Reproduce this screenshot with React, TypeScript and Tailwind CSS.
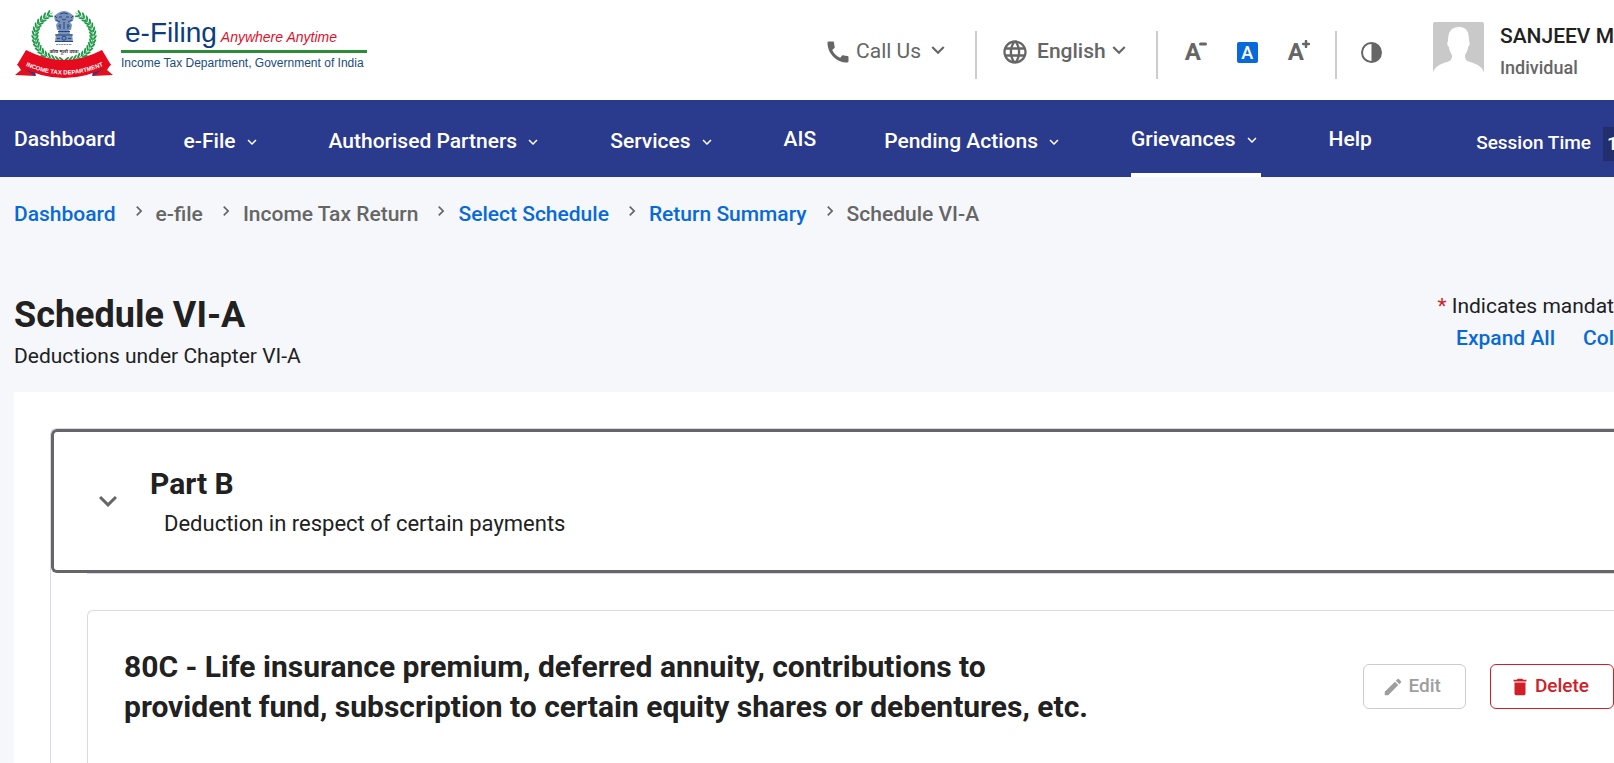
import { useState } from 'react'
import {
  MdCall,
  MdDelete,
  MdEdit,
  MdKeyboardArrowDown,
  MdKeyboardArrowRight,
  MdLanguage,
} from 'react-icons/md'

type NavItem = { label: string; menu?: boolean; active?: boolean }

const navItems: NavItem[] = [
  { label: 'Dashboard' },
  { label: 'e-File', menu: true },
  { label: 'Authorised Partners', menu: true },
  { label: 'Services', menu: true },
  { label: 'AIS' },
  { label: 'Pending Actions', menu: true },
  { label: 'Grievances', menu: true, active: true },
  { label: 'Help' },
]

const crumbs = [
  { label: 'Dashboard', link: true },
  { label: 'e-file' },
  { label: 'Income Tax Return' },
  { label: 'Select Schedule', link: true },
  { label: 'Return Summary', link: true },
  { label: 'Schedule VI-A' },
]

// Leaves of the left half of the wreath, mirrored for the right half.
const leaves = Array.from({ length: 17 }, (_, i) => {
  const deg = 98 + i * 9
  const a = (deg * Math.PI) / 180
  return { x: 49 + Math.cos(a) * 29, y: 27 + Math.sin(a) * 25, deg }
})

function Wreath() {
  return (
    <g fill="#1d9a48">
      {leaves.map((l) => (
        <g key={l.deg} transform={`translate(${l.x} ${l.y}) rotate(${l.deg + 90})`}>
          <ellipse cx="0" cy="-2.2" rx="3" ry="1" transform="rotate(-30)" />
          <ellipse cx="0" cy="2.2" rx="3" ry="1" transform="rotate(30)" />
          <rect x="-2.5" y="-0.3" width="5" height="0.6" />
        </g>
      ))}
    </g>
  )
}

function Emblem() {
  return (
    <svg viewBox="0 0 98 70" className="h-[70px] w-[98px] shrink-0" aria-hidden="true">
      <Wreath />
      <g transform="translate(98 0) scale(-1 1)">
        <Wreath />
      </g>
      {/* lion capital */}
      <g fill="#7891ba">
        <path d="M43 4q6-4 12 0l4 3-1 5-3 1 2 3-1 5H42l-1-5 2-3-3-1-1-5z" />
        <path d="M44 20h10l1 5H43z" />
        <path d="M41 25h16l1 8H40z" />
      </g>
      <g fill="none" stroke="#24477f" strokeWidth="1">
        <path d="M45 5q4-2 8 0M44 8h3M51 8h3M47 10q2 2 4 0M41 11l4 2M57 11l-4 2M45 15v5M49 13v7M53 15v5M43 17h2M53 17h2M40 7l2 2M58 7l-2 2" />
        <path d="M43 22.500h12M40 26h18M40 32.500h18" />
        <circle cx="49" cy="29.200" r="2" />
        <path d="M42 29.500h3M53 29.500h3" />
      </g>
      <path d="M41 35.500h16" stroke="#7d8fb0" strokeWidth="1.200" strokeDasharray="2 0.600" />
      <text
        x="49"
        y="44"
        textAnchor="middle"
        fontSize="5"
        fontWeight="700"
        fill="#333"
        className="font-['Noto_Sans','Noto_Sans_Devanagari',sans-serif]"
      >
        कोष मूलो दण्डः
      </text>
      {/* ribbon */}
      <path d="M2 55 18 58 21 67 0 66 6 61z" fill="#e0101f" />
      <path d="M96 55 80 58 77 67 98 66 92 61z" fill="#e0101f" />
      <path d="M6 57 21 61 20 67z" fill="#253a84" />
      <path d="M92 57 77 61 78 67z" fill="#253a84" />
      <path d="M11 41Q49 61 87 41L96 56Q49 82 2 56z" fill="#e60a1f" />
      <path id="ribbon" d="M7 55Q49 76 92 55" fill="none" />
      <text
        fontSize="6"
        fontWeight="700"
        fill="#fff"
        textAnchor="middle"
        className="font-['Liberation_Sans',sans-serif]"
      >
        <textPath href="#ribbon" startOffset="50%">
          INCOME TAX DEPARTMENT
        </textPath>
      </text>
    </svg>
  )
}

function Logo() {
  return (
    <a
      href="#"
      className="flex items-start gap-2 font-['Liberation_Sans',sans-serif]"
      aria-label="e-Filing home"
    >
      <Emblem />
      <div className="w-[246px]">
        <div className="flex h-11 items-baseline gap-1 border-b-[3px] border-[#2e8b37] px-1 pt-2">
          <span className="text-[28px] leading-8 text-[#0b3c80]">e-Filing</span>
          <span className="text-sm leading-none text-[#e2102c] italic">Anywhere Anytime</span>
        </div>
        <p className="text-xs leading-5 whitespace-nowrap text-[#1a4c7c]">
          Income Tax Department, Government of India
        </p>
      </div>
    </a>
  )
}

function Divider() {
  return <span className="mt-[6px] h-12 w-[2px] bg-[#cccccc]" />
}

function Header() {
  return (
    <header className="flex h-[100px] items-start justify-between bg-white pt-[9px] pl-[15px] text-[#666666]">
      <Logo />
      <div className="flex shrink-0 items-center pt-[11px] whitespace-nowrap">
        <div className="flex h-[62px] items-center">
          <button type="button" className="mr-6 flex items-center text-[21px]">
            <MdCall size={28} className="mr-1" />
            Call Us
            <MdKeyboardArrowDown size={26} className="mb-1 ml-1" />
          </button>
          <Divider />
          <button type="button" className="mr-6 ml-6 flex items-center text-[21px] font-medium">
            <MdLanguage size={28} className="mr-2" />
            English
            <MdKeyboardArrowDown size={26} className="mb-1" />
          </button>
          <Divider />
          <div className="flex items-center gap-[30px] pr-[25px] pl-[27px]">
            <button type="button" aria-label="Decrease text size" className="flex text-2xl leading-6 font-bold">
              A
              <svg viewBox="0 0 8 8" className="-ml-0.5 size-2" aria-hidden="true">
                <path d="M1.500 4h5" stroke="currentColor" strokeWidth="3" strokeLinecap="round" />
              </svg>
            </button>
            <button
              type="button"
              aria-label="Default text size"
              className="size-[21px] rounded-xs bg-[#086ad8] text-lg leading-[21px] font-medium text-white"
            >
              A
            </button>
            <button type="button" aria-label="Increase text size" className="flex text-2xl leading-6 font-bold">
              A
              <svg viewBox="0 0 8 8" className="-ml-0.5 size-2" aria-hidden="true">
                <path d="M1 4h6M4 1v6" stroke="currentColor" strokeWidth="2.500" strokeLinecap="round" />
              </svg>
            </button>
          </div>
          <Divider />
          <button type="button" aria-label="Toggle contrast" className="mr-[51px] ml-6">
            <svg viewBox="0 0 21 21" className="size-[21px]" aria-hidden="true">
              <circle cx="10.500" cy="10.500" r="9.500" fill="none" stroke="currentColor" strokeWidth="2" />
              <path d="M10.500 1a9.500 9.500 0 0 1 0 19z" fill="currentColor" />
            </svg>
          </button>
        </div>
        <svg viewBox="0 0 51 51" className="mr-4 mb-[10px] size-[51px]" aria-hidden="true">
          <rect width="51" height="51" rx="2" fill="#c9c9c9" />
          <path
            d="M0 51c1-6 7-9 14-11 4-1 5-3 5-7-2-3-3-6-3-8-2-1-2-5-1-6 0-9 3-14 11-14s10 5 10 14c1 1 1 5-1 6 0 2-1 5-3 8 0 4 1 6 5 7 7 2 13 5 14 11z"
            fill="#fff"
          />
        </svg>
        <div className="font-medium">
          <p className="text-[21px] leading-8 text-[#212121]">SANJEEV M</p>
          <p className="text-lg leading-8">Individual</p>
        </div>
      </div>
    </header>
  )
}

function NavBar() {
  return (
    <nav className="flex h-[77px] items-stretch justify-between bg-[#2a3a8c] pl-[14px] font-medium whitespace-nowrap text-white">
      <ul className="flex gap-[68px] text-[21px]">
        {navItems.map((item) => (
          <li
            key={item.label}
            className={
              item.active
                ? 'flex border-b-4 border-white pt-1.5'
                : item.menu
                  ? 'flex pt-1.5'
                  : 'flex pt-0.5'
            }
          >
            {item.menu ? (
              <button type="button" className="flex items-center gap-[7px]">
                {item.label}
                <MdKeyboardArrowDown size={18} />
              </button>
            ) : (
              <a href="#" className="flex items-center">
                {item.label}
              </a>
            )}
          </li>
        ))}
      </ul>
      <p className="flex items-center gap-3 pt-2.5 text-[19px]">
        Session Time
        <span className="w-[11px] bg-[#232f6c] pl-1 leading-[34px]">1</span>
      </p>
    </nav>
  )
}

function Breadcrumb() {
  return (
    <ol className="flex text-[21px] leading-7 font-medium whitespace-nowrap text-[#666666]">
      {crumbs.map((c, i) => (
        <li key={c.label} className="flex">
          {i > 0 && <MdKeyboardArrowRight size={20} className="mt-px mr-[7px] ml-[13px]" />}
          {c.link ? (
            <a href="#" className="text-[#086ad8]">
              {c.label}
            </a>
          ) : (
            c.label
          )}
        </li>
      ))}
    </ol>
  )
}

export default function App() {
  const [open, setOpen] = useState(true)

  return (
    <div className="min-h-screen overflow-hidden bg-[#f5f7fb] font-['Roboto',sans-serif] text-[#212121]">
      <Header />
      <NavBar />
      <main className="pl-[14px]">
        <div className="pt-[23px]">
          <Breadcrumb />
        </div>

        <div className="flex justify-between pt-[62px] pb-5">
          <div>
            <h1 className="text-4xl leading-[50px] font-bold">Schedule VI-A</h1>
            <p className="text-[21px] leading-8">Deductions under Chapter VI-A</p>
          </div>
          <div className="text-[21px] leading-8 whitespace-nowrap">
            <p>
              <span className="text-[#d32027]">*</span> Indicates mandat
            </p>
            <div className="flex justify-end gap-7 font-medium text-[#086ad8]">
              <button type="button">Expand All</button>
              <button type="button">Col</button>
            </div>
          </div>
        </div>

        <section className="bg-white pt-9 pl-9">
          <div className="rounded-tl-md border-t border-l border-[#d8d8ea]">
            <button
              type="button"
              onClick={() => setOpen(!open)}
              aria-expanded={open}
              className="flex h-36 w-full items-center gap-6 rounded-l-md border-[3px] border-r-0 border-[#666666] pl-9 text-left"
            >
              <MdKeyboardArrowDown size={36} className="text-[#666666]" />
              <span className="pt-1.5">
                <span className="block text-3xl leading-10 font-bold">Part B</span>
                <span className="block pl-[14px] text-[22px] leading-10">
                  Deduction in respect of certain payments
                </span>
              </span>
            </button>
            {open && (
              <div className="ml-9 border-t border-[#d8d8ea] pt-9">
                <article className="flex min-h-[200px] items-start justify-between rounded-tl-md border-t border-l border-[#d8d8ea] pt-9 pl-9">
                  <h2 className="max-w-[1000px] text-3xl leading-10 font-bold">
                    80C - Life insurance premium, deferred annuity, contributions to
                    <br />
                    provident fund, subscription to certain equity shares or debentures, etc.
                  </h2>
                  <div className="flex shrink-0 gap-6 pt-[17px] text-[19px] font-medium">
                    <button
                      type="button"
                      disabled
                      className="flex h-[45px] items-center gap-1 rounded-md border border-[#cccccc] pr-6 pl-[18px] text-[#9e9e9e]"
                    >
                      <MdEdit size={22} />
                      Edit
                    </button>
                    <button
                      type="button"
                      className="flex h-[45px] items-center gap-1 rounded-md border border-[#cf2027] pr-6 pl-[18px] text-[#cf2027]"
                    >
                      <MdDelete size={22} />
                      Delete
                    </button>
                  </div>
                </article>
              </div>
            )}
          </div>
        </section>
      </main>
    </div>
  )
}
